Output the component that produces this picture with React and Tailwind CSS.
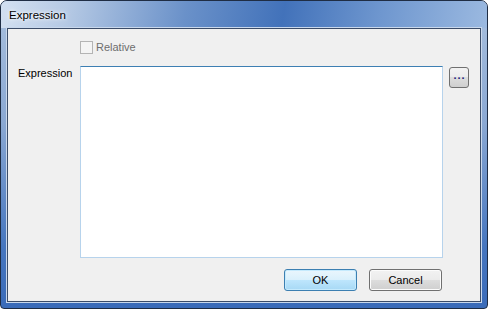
export default function App() {
  const font = { fontFamily: '"Liberation Sans", Arial, sans-serif' };
  return (
    <div
      className="w-[488px] h-[309px] flex flex-col rounded-t-[7px] rounded-b-[4px] border border-[#1f2d44] px-[6px] pb-[6px] text-[11px] text-black bg-[linear-gradient(180deg,#a9c0de_0%,#8aa8d3_40%,#4676bf_80%,#3a6bb9_100%)]"
      style={font}
    >
      {/* Title bar */}
      <div className="h-[27px] -mx-[6px] px-[8px] flex items-center rounded-t-[6px] bg-[linear-gradient(100deg,#d3e0f1_0%,#b5c9e4_14%,#6a91c9_38%,#4272ba_58%,#6f97cf_78%,#9bb9e0_100%)]">
        <span className="text-[11.5px] leading-none pt-[2px] [text-shadow:0_0_6px_#ffffff,0_0_3px_#ffffff]">Expression</span>
      </div>
      {/* Client area */}
      <div className="flex-1 border border-[#3b4c68] shadow-[0_0_0_1px_#c9d8ec] bg-[#f0f0f0] flex flex-col pl-[10px] pr-[10px] pt-[12px]">
        <div className="pl-[62px] flex items-center gap-[3px] h-[13px]">
          <div className="w-[13px] h-[13px] border border-[#b4b4b4] bg-[#f4f4f4]" />
          <span className="text-[#6d6d6d] leading-none">Relative</span>
        </div>
        <div className="mt-[12px] flex items-start">
          <div className="w-[62px] pt-0 leading-[14px]">Expression</div>
          <div className="w-[363px] h-[192px] bg-white border border-[#b7d3ec] border-t-[#3d7fb3]" />
          <div className="ml-[6px] mt-[1px] w-[20px] h-[21px] rounded-[3px] border border-[#707070] bg-[linear-gradient(180deg,#f2f2f2_0%,#ebebeb_50%,#dddddd_50%,#cfcfcf_100%)] flex items-end justify-center pb-[6px]">
            <span className="text-[#23237a] leading-none text-[11px] font-bold tracking-[1px] pl-[1px]">...</span>
          </div>
        </div>
        <div className="mt-[11px] ml-[62px] w-[362px] flex justify-end gap-[12px]">
          <button className="w-[73px] h-[22px] rounded-[3px] border border-[#3c7fb1] bg-[linear-gradient(180deg,#eaf6fd_0%,#d9f0fc_50%,#bee6fd_50%,#a7d9f5_100%)] shadow-[inset_0_0_0_1px_#c5eafd] leading-none">
            OK
          </button>
          <button className="w-[73px] h-[22px] rounded-[3px] border border-[#707070] bg-[linear-gradient(180deg,#f2f2f2_0%,#ebebeb_50%,#dddddd_50%,#cfcfcf_100%)] shadow-[inset_0_0_0_1px_#fcfcfc] leading-none">
            Cancel
          </button>
        </div>
      </div>
    </div>
  );
}
